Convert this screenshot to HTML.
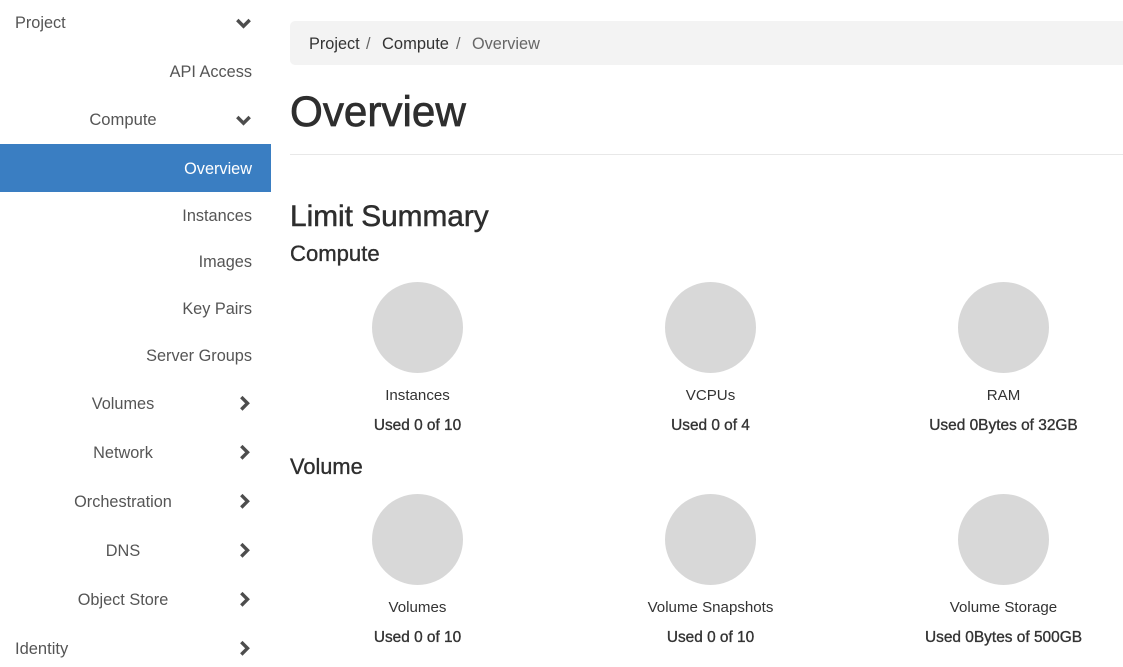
<!DOCTYPE html>
<html>
<head>
<meta charset="utf-8">
<style>
html,body{margin:0;padding:0;background:#fff;width:1123px;height:667px;overflow:hidden}
body{position:relative;font-family:"Liberation Sans",sans-serif;color:#333}
.t{position:absolute;white-space:nowrap;line-height:20px;font-size:16.3px;color:#555}
.r{transform:translateX(-100%)}
.c{transform:translateX(-50%)}
.m{color:#333;font-size:15.1px}
.b{color:#333;font-size:15.4px;-webkit-text-stroke:.35px #333}
.bl{font-size:15.45px}
.circle{position:absolute;width:91.5px;height:91.5px;border-radius:50%;background:#d8d8d8}
svg{position:absolute}
.h{position:absolute;white-space:nowrap;color:#2e2e2e}
</style>
</head>
<body>
<div style="position:absolute;left:0;top:144px;width:271px;height:48px;background:#3a7ec2"></div>

<div class="t" style="left:15px;top:13px">Project</div>
<div class="t r" style="left:252px;top:62px">API Access</div>
<div class="t c" style="left:123px;top:110px;font-size:16.6px">Compute</div>
<div class="t r" style="left:252px;top:159px;color:#fff">Overview</div>
<div class="t r" style="left:252px;top:206px">Instances</div>
<div class="t r" style="left:252px;top:252px">Images</div>
<div class="t r" style="left:252px;top:299px">Key Pairs</div>
<div class="t r" style="left:252px;top:346px">Server Groups</div>
<div class="t c" style="left:123px;top:394px">Volumes</div>
<div class="t c" style="left:123px;top:443px">Network</div>
<div class="t c" style="left:123px;top:492px">Orchestration</div>
<div class="t c" style="left:123px;top:541px">DNS</div>
<div class="t c" style="left:123px;top:590px">Object Store</div>
<div class="t" style="left:15px;top:639px;font-size:16.5px">Identity</div>

<svg width="16" height="12" style="left:236px;top:18px"><path d="M1.3 2L7.5 8.2 13.7 2" fill="none" stroke="#4d4d4d" stroke-width="3.4"/></svg>
<svg width="16" height="12" style="left:236px;top:115px"><path d="M1.3 2L7.5 8.2 13.7 2" fill="none" stroke="#4d4d4d" stroke-width="3.4"/></svg>
<svg width="12" height="16" style="left:239px;top:395px"><path d="M2.3 2.1L8.5 8.3 2.3 14.5" fill="none" stroke="#4d4d4d" stroke-width="3.4"/></svg>
<svg width="12" height="16" style="left:239px;top:444px"><path d="M2.3 2.1L8.5 8.3 2.3 14.5" fill="none" stroke="#4d4d4d" stroke-width="3.4"/></svg>
<svg width="12" height="16" style="left:239px;top:493px"><path d="M2.3 2.1L8.5 8.3 2.3 14.5" fill="none" stroke="#4d4d4d" stroke-width="3.4"/></svg>
<svg width="12" height="16" style="left:239px;top:542px"><path d="M2.3 2.1L8.5 8.3 2.3 14.5" fill="none" stroke="#4d4d4d" stroke-width="3.4"/></svg>
<svg width="12" height="16" style="left:239px;top:591px"><path d="M2.3 2.1L8.5 8.3 2.3 14.5" fill="none" stroke="#4d4d4d" stroke-width="3.4"/></svg>
<svg width="12" height="16" style="left:239px;top:640px"><path d="M2.3 2.1L8.5 8.3 2.3 14.5" fill="none" stroke="#4d4d4d" stroke-width="3.4"/></svg>

<div style="position:absolute;left:290px;top:21px;width:833px;height:44px;background:#f3f3f3;border-radius:5px 0 0 5px"></div>
<div class="t" style="left:309px;top:34px;color:#333">Project</div>
<div class="t" style="left:366px;top:34px;color:#666">/</div>
<div class="t" style="left:382px;top:34px;color:#333;font-size:16.5px">Compute</div>
<div class="t" style="left:456px;top:34px;color:#666">/</div>
<div class="t" style="left:472px;top:34px;color:#666">Overview</div>

<div class="h" style="left:290px;top:84px;font-size:42.2px;line-height:56px;-webkit-text-stroke:.7px #2e2e2e">Overview</div>
<div style="position:absolute;left:290px;top:154px;width:833px;height:1px;background:#e8e8e8"></div>

<div class="h" style="left:290px;top:199px;font-size:29.8px;line-height:36px;-webkit-text-stroke:.5px #2e2e2e">Limit Summary</div>
<div class="h" style="left:290px;top:240px;font-size:22.1px;line-height:28px;-webkit-text-stroke:.35px #2e2e2e">Compute</div>
<div class="h" style="left:290px;top:453px;font-size:21.8px;line-height:28px;-webkit-text-stroke:.35px #2e2e2e">Volume</div>

<div class="circle" style="left:371.8px;top:281.8px"></div>
<div class="circle" style="left:664.8px;top:281.8px"></div>
<div class="circle" style="left:957.8px;top:281.8px"></div>
<div class="circle" style="left:371.8px;top:493.8px"></div>
<div class="circle" style="left:664.8px;top:493.8px"></div>
<div class="circle" style="left:957.8px;top:493.8px"></div>

<div class="t c m" style="left:417.5px;top:386px">Instances</div>
<div class="t c b" style="left:417.5px;top:416px">Used 0 of 10</div>
<div class="t c m" style="left:710.5px;top:386px">VCPUs</div>
<div class="t c b" style="left:710.5px;top:416px">Used 0 of 4</div>
<div class="t c m" style="left:1003.5px;top:386px">RAM</div>
<div class="t c b bl" style="left:1003.5px;top:416px">Used 0Bytes of 32GB</div>

<div class="t c m" style="left:417.5px;top:598px">Volumes</div>
<div class="t c b" style="left:417.5px;top:628px">Used 0 of 10</div>
<div class="t c m" style="left:710.5px;top:598px">Volume Snapshots</div>
<div class="t c b" style="left:710.5px;top:628px">Used 0 of 10</div>
<div class="t c m" style="left:1003.5px;top:598px">Volume Storage</div>
<div class="t c b bl" style="left:1003.5px;top:628px">Used 0Bytes of 500GB</div>
</body>
</html>
